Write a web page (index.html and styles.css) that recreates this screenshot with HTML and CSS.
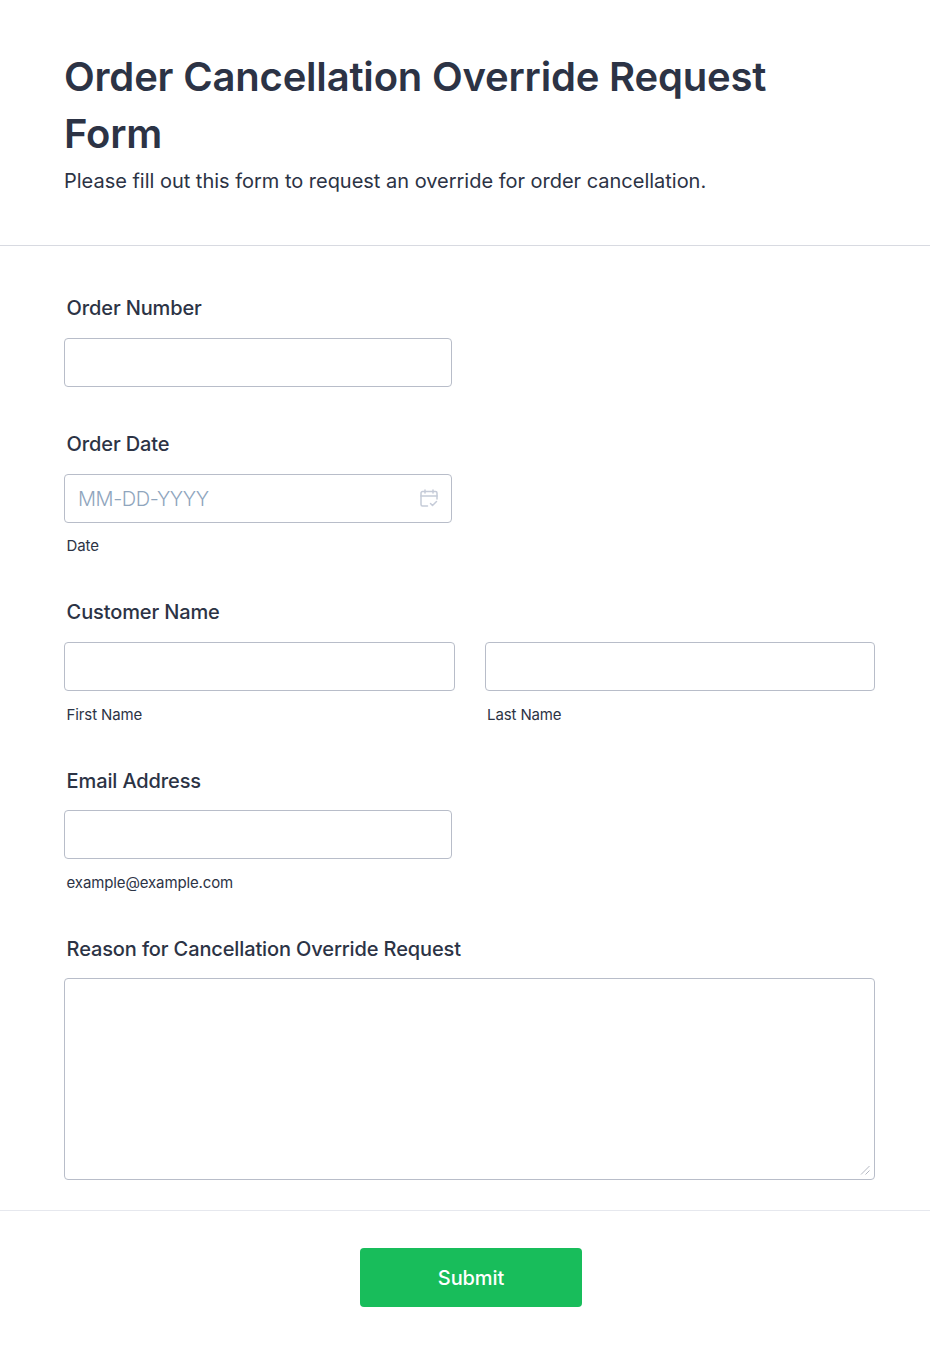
FILE: index.html
```html
<!DOCTYPE html>
<html lang="en">
<head>
<meta charset="utf-8">
<title>Order Cancellation Override Request Form</title>
<link rel="stylesheet" href="styles.css">
</head>
<body>
<main class="form">
  <header class="form-header">
    <h1 class="form-title">Order Cancellation Override Request Form</h1>
    <p class="form-subtitle">Please fill out this form to request an override for order cancellation.</p>
  </header>
  <section class="form-body">
    <div class="field">
      <label class="field-label">Order Number</label>
      <input class="input input-half" type="text">
    </div>
    <div class="field">
      <label class="field-label">Order Date</label>
      <div class="date-wrap">
        <input class="input input-date" type="text" placeholder="MM-DD-YYYY">
        <svg class="date-icon" width="18" height="18" viewBox="0 0 18 18" fill="none" stroke="#c5cbd8" stroke-width="1.5" stroke-linecap="round" stroke-linejoin="round">
          <path d="M7.5 17H2.5A1.5 1.5 0 0 1 1 15.500V4A1.500 1.500 0 0 1 2.500 2.500h13A1.500 1.500 0 0 1 17 4V10"/>
          <path d="M1 7h16M5 1v3M13 1v3M10.500 14.500l2 2 4-4"/>
        </svg>
      </div>
      <span class="sublabel">Date</span>
    </div>
    <div class="field">
      <label class="field-label">Customer Name</label>
      <div class="name-row">
        <div class="name-col">
          <input class="input" type="text">
          <span class="sublabel">First Name</span>
        </div>
        <div class="name-col">
          <input class="input" type="text">
          <span class="sublabel">Last Name</span>
        </div>
      </div>
    </div>
    <div class="field">
      <label class="field-label field-label-low">Email Address</label>
      <input class="input input-half" type="email">
      <span class="sublabel">example@example.com</span>
    </div>
    <div class="field field-last">
      <label class="field-label field-label-low">Reason for Cancellation Override Request</label>
      <div class="textarea-wrap">
        <textarea class="textarea"></textarea>
        <svg class="resize-grip" width="10" height="10" viewBox="0 0 10 10" fill="none" stroke="#b4b8c2" stroke-width="1">
          <path d="M1 9.500L9.500 1M5.500 9.500L9.500 5.500"/>
        </svg>
      </div>
    </div>
  </section>
  <footer class="form-footer">
    <button class="submit" type="button">Submit</button>
  </footer>
</main>
</body>
</html>
```
FILE: styles.css
```css
* { box-sizing: border-box; }
html, body { margin: 0; padding: 0; background: #fff; }
body { font-family: Inter, "Liberation Sans", sans-serif; color: #2c3345; }
.form { width: 930px; height: 1357px; display: flex; flex-direction: column; }
.form-header { height: 246px; padding: 48px 64px 0; border-bottom: 1px solid #d8dae1; }
.form-title { margin: 0 0 4px; font-size: 40px; line-height: 57px; font-weight: 600; letter-spacing: -0.19px; color: #2c3345; }
.form-subtitle { margin: 0; font-size: 20px; line-height: 30px; font-weight: 430; letter-spacing: -0.015px; color: #2c3345; }
.form-body { height: 965px; padding: 49px 55px 0 64px; border-bottom: 1px solid #e6e8ee; }
.field { margin-bottom: 44px; }
.field-last { margin-bottom: 0; }
.field-label { display: block; padding-left: 2.6px; font-size: 20px; line-height: 27px; font-weight: 500; letter-spacing: -0.125px; margin-bottom: 16px; }
.field-label-low { padding-top: 1px; margin-bottom: 15px; }
.input { display: block; width: 100%; height: 49px; border: 1px solid #b8bdc9; border-radius: 4px; padding: 0 13px; background: #fff; font-family: inherit; font-size: 20px; font-weight: 300; letter-spacing: -0.4px; color: #2c3345; outline: none; }
.input-half, .date-wrap { width: 388px; }
.input::placeholder { color: #8fa5bd; opacity: 1; }
.date-wrap { position: relative; }
.date-icon { position: absolute; right: 14px; top: 15px; }
.sublabel { display: block; padding-left: 2.6px; margin-top: 14.4px; font-size: 15px; line-height: 17.75px; letter-spacing: -0.13px; color: #2c3345; }
.name-row { display: flex; gap: 30px; }
.name-col { flex: 1; }
.textarea-wrap { position: relative; }
.textarea { display: block; width: 100%; height: 201.5px; border: 1px solid #b8bdc9; border-radius: 4px; background: #fff; outline: none; resize: none; }
.resize-grip { position: absolute; right: 5px; bottom: 5px; }
.form-footer { display: flex; justify-content: center; padding: 37px 0 0 12px; }
.submit { width: 222px; height: 59px; border: 0; border-radius: 4px; background: #18bd5b; color: #fff; font-family: inherit; font-size: 20px; font-weight: 500; letter-spacing: -0.1px; }
```
